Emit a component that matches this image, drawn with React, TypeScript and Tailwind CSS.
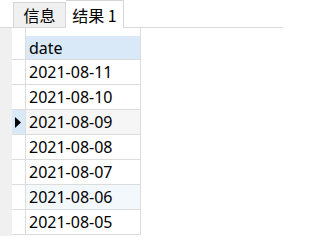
import React from "react";

const rows = [
  { d: "2021-08-11", bg: "bg-white", cur: false },
  { d: "2021-08-10", bg: "bg-white", cur: false },
  { d: "2021-08-09", bg: "bg-[#f6f6f6]", cur: true },
  { d: "2021-08-08", bg: "bg-white", cur: false },
  { d: "2021-08-07", bg: "bg-white", cur: false },
  { d: "2021-08-06", bg: "bg-[#f3f8fd]", cur: false },
  { d: "2021-08-05", bg: "bg-white", cur: false },
];

export default function App() {
  return (
    <div className="w-[283px] h-[236px] bg-white overflow-hidden font-['Noto_Sans','Noto_Sans_CJK_SC',sans-serif] text-black">
      <div className="h-[28px] flex items-end pl-[13px] border-b border-[#dadada] relative">
        <div className="w-[53px] h-[25px] bg-[#f0f0f0] border border-b-0 border-[#d6d6d6] flex items-center justify-center text-[16px] leading-none font-['Noto_Sans_CJK_SC',sans-serif]">
          信息
        </div>
        <div className="w-[58px] h-[28px] -mb-px bg-white border border-b-0 border-[#d6d6d6] border-l-0 flex items-center justify-center text-[16px] leading-none font-['Noto_Sans_CJK_SC',sans-serif] relative z-10">
          结果 1
        </div>
      </div>
      <div className="flex h-[208px]">
        <div className="w-[12px] bg-[#f0f0f0]" />
        <div className="flex flex-col">
          <div className="flex h-[32px]">
            <div className="w-[14px] border-r border-b border-[#dcdcdc] bg-white" />
            <div className="w-[115px] border-r border-b border-[#dcdcdc] bg-white flex flex-col">
              <div className="h-[8px]" />
              <div className="flex-1 bg-[#d9e9f7] flex items-center pl-[3px] text-[16px] leading-none">
                date
              </div>
            </div>
          </div>
          {rows.map((r) => (
            <div key={r.d} className="flex h-[25px]">
              <div
                className={`w-[14px] border-r border-b border-[#dcdcdc] flex items-center justify-center ${
                  r.cur ? "bg-[#d9e9f7]" : "bg-white"
                }`}
              >
                {r.cur && (
                  <svg width="6" height="11" viewBox="0 0 6 11" className="ml-[-1px]">
                    <path d="M0 0 L6 5.5 L0 11 Z" fill="#000" />
                  </svg>
                )}
              </div>
              <div
                className={`w-[115px] border-r border-b border-[#dcdcdc] flex items-center pl-[3px] text-[16px] leading-none ${r.bg}`}
              >
                {r.d}
              </div>
            </div>
          ))}
        </div>
      </div>
    </div>
  );
}
